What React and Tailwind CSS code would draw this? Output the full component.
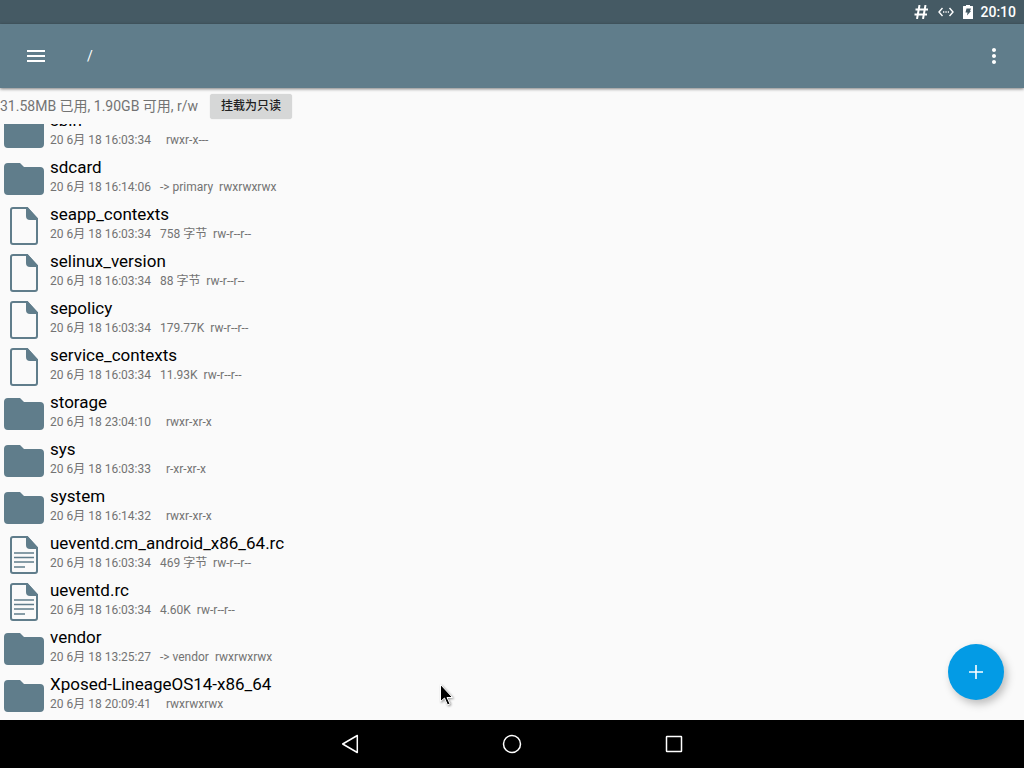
import React from "react";

const entries = [
  { name: "sbin", type: "folder", date: "20 6月 18 16:03:34", size: "", perms: "rwxr-x---" },
  { name: "sdcard", type: "folder", date: "20 6月 18 16:14:06", size: "-> primary", perms: "rwxrwxrwx" },
  { name: "seapp_contexts", type: "file", date: "20 6月 18 16:03:34", size: "758 字节", perms: "rw-r--r--" },
  { name: "selinux_version", type: "file", date: "20 6月 18 16:03:34", size: "88 字节", perms: "rw-r--r--" },
  { name: "sepolicy", type: "file", date: "20 6月 18 16:03:34", size: "179.77K", perms: "rw-r--r--" },
  { name: "service_contexts", type: "file", date: "20 6月 18 16:03:34", size: "11.93K", perms: "rw-r--r--" },
  { name: "storage", type: "folder", date: "20 6月 18 23:04:10", size: "", perms: "rwxr-xr-x" },
  { name: "sys", type: "folder", date: "20 6月 18 16:03:33", size: "", perms: "r-xr-xr-x" },
  { name: "system", type: "folder", date: "20 6月 18 16:14:32", size: "", perms: "rwxr-xr-x" },
  { name: "ueventd.cm_android_x86_64.rc", type: "text", date: "20 6月 18 16:03:34", size: "469 字节", perms: "rw-r--r--" },
  { name: "ueventd.rc", type: "text", date: "20 6月 18 16:03:34", size: "4.60K", perms: "rw-r--r--" },
  { name: "vendor", type: "folder", date: "20 6月 18 13:25:27", size: "-> vendor", perms: "rwxrwxrwx" },
  { name: "Xposed-LineageOS14-x86_64", type: "folder", date: "20 6月 18 20:09:41", size: "", perms: "rwxrwxrwx" },
];

function EntryIcon({ type }) {
  if (type === "folder") {
    return (
      <svg viewBox="0 0 48 47" className="w-12 h-[47px] shrink-0 fill-[#607d8b]" aria-hidden="true">
        <path d="M8 7h12l4 4h16a4 4 0 0 1 4 4v20a4 4 0 0 1-4 4H8a4 4 0 0 1-4-4V11a4 4 0 0 1 4-4z" />
      </svg>
    );
  }
  return (
    <svg viewBox="0 0 48 47" className="w-12 h-[47px] shrink-0" aria-hidden="true">
      <path
        d="M13 5h14l10 11v23a2 2 0 0 1-2 2H13a2 2 0 0 1-2-2V7a2 2 0 0 1 2-2z"
        fill="none"
        stroke="#607d8b"
        strokeWidth="2"
      />
      <path d="M26 4h1.5L38 15.5V17h-8a4 4 0 0 1-4-4z" fill="#607d8b" />
      {type === "text" && (
        <path d="M14 21h20M14 25.5h20M14 30h20M14 35h11" stroke="#607d8b" strokeWidth="1.7" />
      )}
    </svg>
  );
}

function StatusBar() {
  return (
    <div className="h-6 shrink-0 bg-[#455a64] text-white flex items-center justify-end pr-2">
      <svg viewBox="0 0 14 14" className="w-[14px] h-[14px] mr-[10px]" fill="none" stroke="#fff" strokeWidth="2" aria-hidden="true">
        <path d="M5.5 0L3 14M11.5 0L9 14M1.5 4.5H14M0.5 9.5h12.5" />
      </svg>
      <svg viewBox="0 0 16 10" className="w-4 h-[10px] mr-[9px]" fill="none" stroke="#fff" strokeWidth="1.4" aria-hidden="true">
        <path d="M4.5 1L1 5l3.5 4M11.5 1L15 5l-3.5 4" />
        <path d="M5 5h1.3M7.4 5h1.3M9.8 5H11" />
      </svg>
      <svg viewBox="0 0 10 14" className="w-[10px] h-[14px] mr-[7px]" aria-hidden="true">
        <path d="M3 0h4v1h2.5a.5.5 0 0 1 .5.5v12a.5.5 0 0 1-.5.5h-9a.5.5 0 0 1-.5-.5v-12A.5.5 0 0 1 .500 1H3z" fill="#fff" />
        <path d="M3.500 3.500h4.500L7 6h1L4 10.500l.5-3H2.500z" fill="#455a64" />
      </svg>
      <span className="text-[14px] leading-6 font-medium">20:10</span>
    </div>
  );
}

function Toolbar() {
  return (
    <header className="h-16 shrink-0 bg-[#607d8b] text-white flex items-center px-6 relative z-10 shadow-[0_1px_3px_rgba(0,0,0,0.5)]">
      <button aria-label="菜单" className="w-6 h-6">
        <svg viewBox="0 0 24 24" className="w-6 h-6" fill="currentColor">
          <path d="M3 18h18v-2H3v2zm0-5h18v-2H3v2zm0-7v2h18V6H3z" />
        </svg>
      </button>
      <a href="#root" className="ml-[39px] text-[14px] leading-5">/</a>
      <button aria-label="更多选项" className="w-6 h-6 ml-auto -mr-[6px]">
        <svg viewBox="0 0 24 24" className="w-6 h-6" fill="currentColor">
          <path d="M12 8c1.1 0 2-.9 2-2s-.9-2-2-2-2 .9-2 2 .9 2 2 2zm0 2c-1.1 0-2 .9-2 2s.9 2 2 2 2-.9 2-2-.9-2-2-2zm0 6c-1.1 0-2 .9-2 2s.9 2 2 2 2-.9 2-2-.9-2-2-2z" />
        </svg>
      </button>
    </header>
  );
}

function NavBar() {
  return (
    <nav className="h-12 shrink-0 bg-black text-white flex items-center justify-center gap-[138px]">
      <button aria-label="返回" className="w-6 h-6">
        <svg viewBox="0 0 24 24" className="w-6 h-6" fill="none" stroke="currentColor" strokeWidth="1.5" strokeLinejoin="round">
          <path d="M19.3 3.5v17L4.700 12z" />
        </svg>
      </button>
      <button aria-label="主屏幕" className="w-6 h-6">
        <svg viewBox="0 0 24 24" className="w-6 h-6" fill="none" stroke="currentColor" strokeWidth="1.5">
          <circle cx="12" cy="12" r="8.5" />
        </svg>
      </button>
      <button aria-label="最近任务" className="w-6 h-6">
        <svg viewBox="0 0 24 24" className="w-6 h-6" fill="none" stroke="currentColor" strokeWidth="1.5">
          <rect x="4.5" y="4.5" width="15" height="15" rx="0.5" />
        </svg>
      </button>
    </nav>
  );
}

export default function App() {
  return (
    <div
      lang="zh-CN"
      className="h-screen flex flex-col bg-[#fafafa] overflow-hidden font-['Roboto','Noto_Sans_CJK_SC',sans-serif]"
    >
      <StatusBar />
      <Toolbar />

      <main className="flex-1 min-h-0 flex flex-col relative">
        <div className="h-9 shrink-0 flex items-center gap-3 text-[#737373]">
          <p className="text-[14px] leading-5">31.58MB 已用, 1.90GB 可用, r/w</p>
          <button className="h-[25px] px-[11px] rounded-[3px] bg-[#d6d7d7] text-[#212121] text-[12px] leading-4 font-medium shadow-[0_0_1px_rgba(0,0,0,0.2)]">
            挂载为只读
          </button>
        </div>

        {/* scrolled to the end, the top row is cut off */}
        <ul className="flex-1 min-h-0 overflow-hidden flex flex-col justify-end">
          {entries.map((entry) => (
            <li key={entry.name} className="h-[47px] shrink-0 flex gap-[2px]">
              <EntryIcon type={entry.type} />
              <div>
                <p className="text-[17px] leading-[22px] text-black">{entry.name}</p>
                <p className="text-[12px] leading-[18px] text-[#737373] whitespace-pre flex">
                  <span className="min-w-[104px]">{entry.date}</span>
                  <span>{`  ${entry.size}  ${entry.perms}`}</span>
                </p>
              </div>
            </li>
          ))}
        </ul>

        <button
          aria-label="新建"
          className="absolute right-5 bottom-5 w-14 h-14 rounded-full bg-[#039be5] text-white flex items-center justify-center shadow-[3px_4px_8px_rgba(0,0,0,0.25)]"
        >
          <svg viewBox="0 0 24 24" className="w-6 h-6" fill="none" stroke="currentColor" strokeWidth="1.6">
            <path d="M12 5v14M5 12h14" />
          </svg>
        </button>

        {/* mouse pointer */}
        <svg
          viewBox="0 0 16 24"
          className="absolute left-[43%] bottom-3 w-4 h-6 pointer-events-none drop-shadow-[1px_1px_1px_rgba(0,0,0,0.4)]"
          aria-hidden="true"
        >
          <path d="M0.5 0.5v17l4-3.5 3 7 2.500-1.200-3-6.300h5.500z" fill="#000" stroke="#fff" strokeWidth="1" />
        </svg>
      </main>

      <NavBar />
    </div>
  );
}
